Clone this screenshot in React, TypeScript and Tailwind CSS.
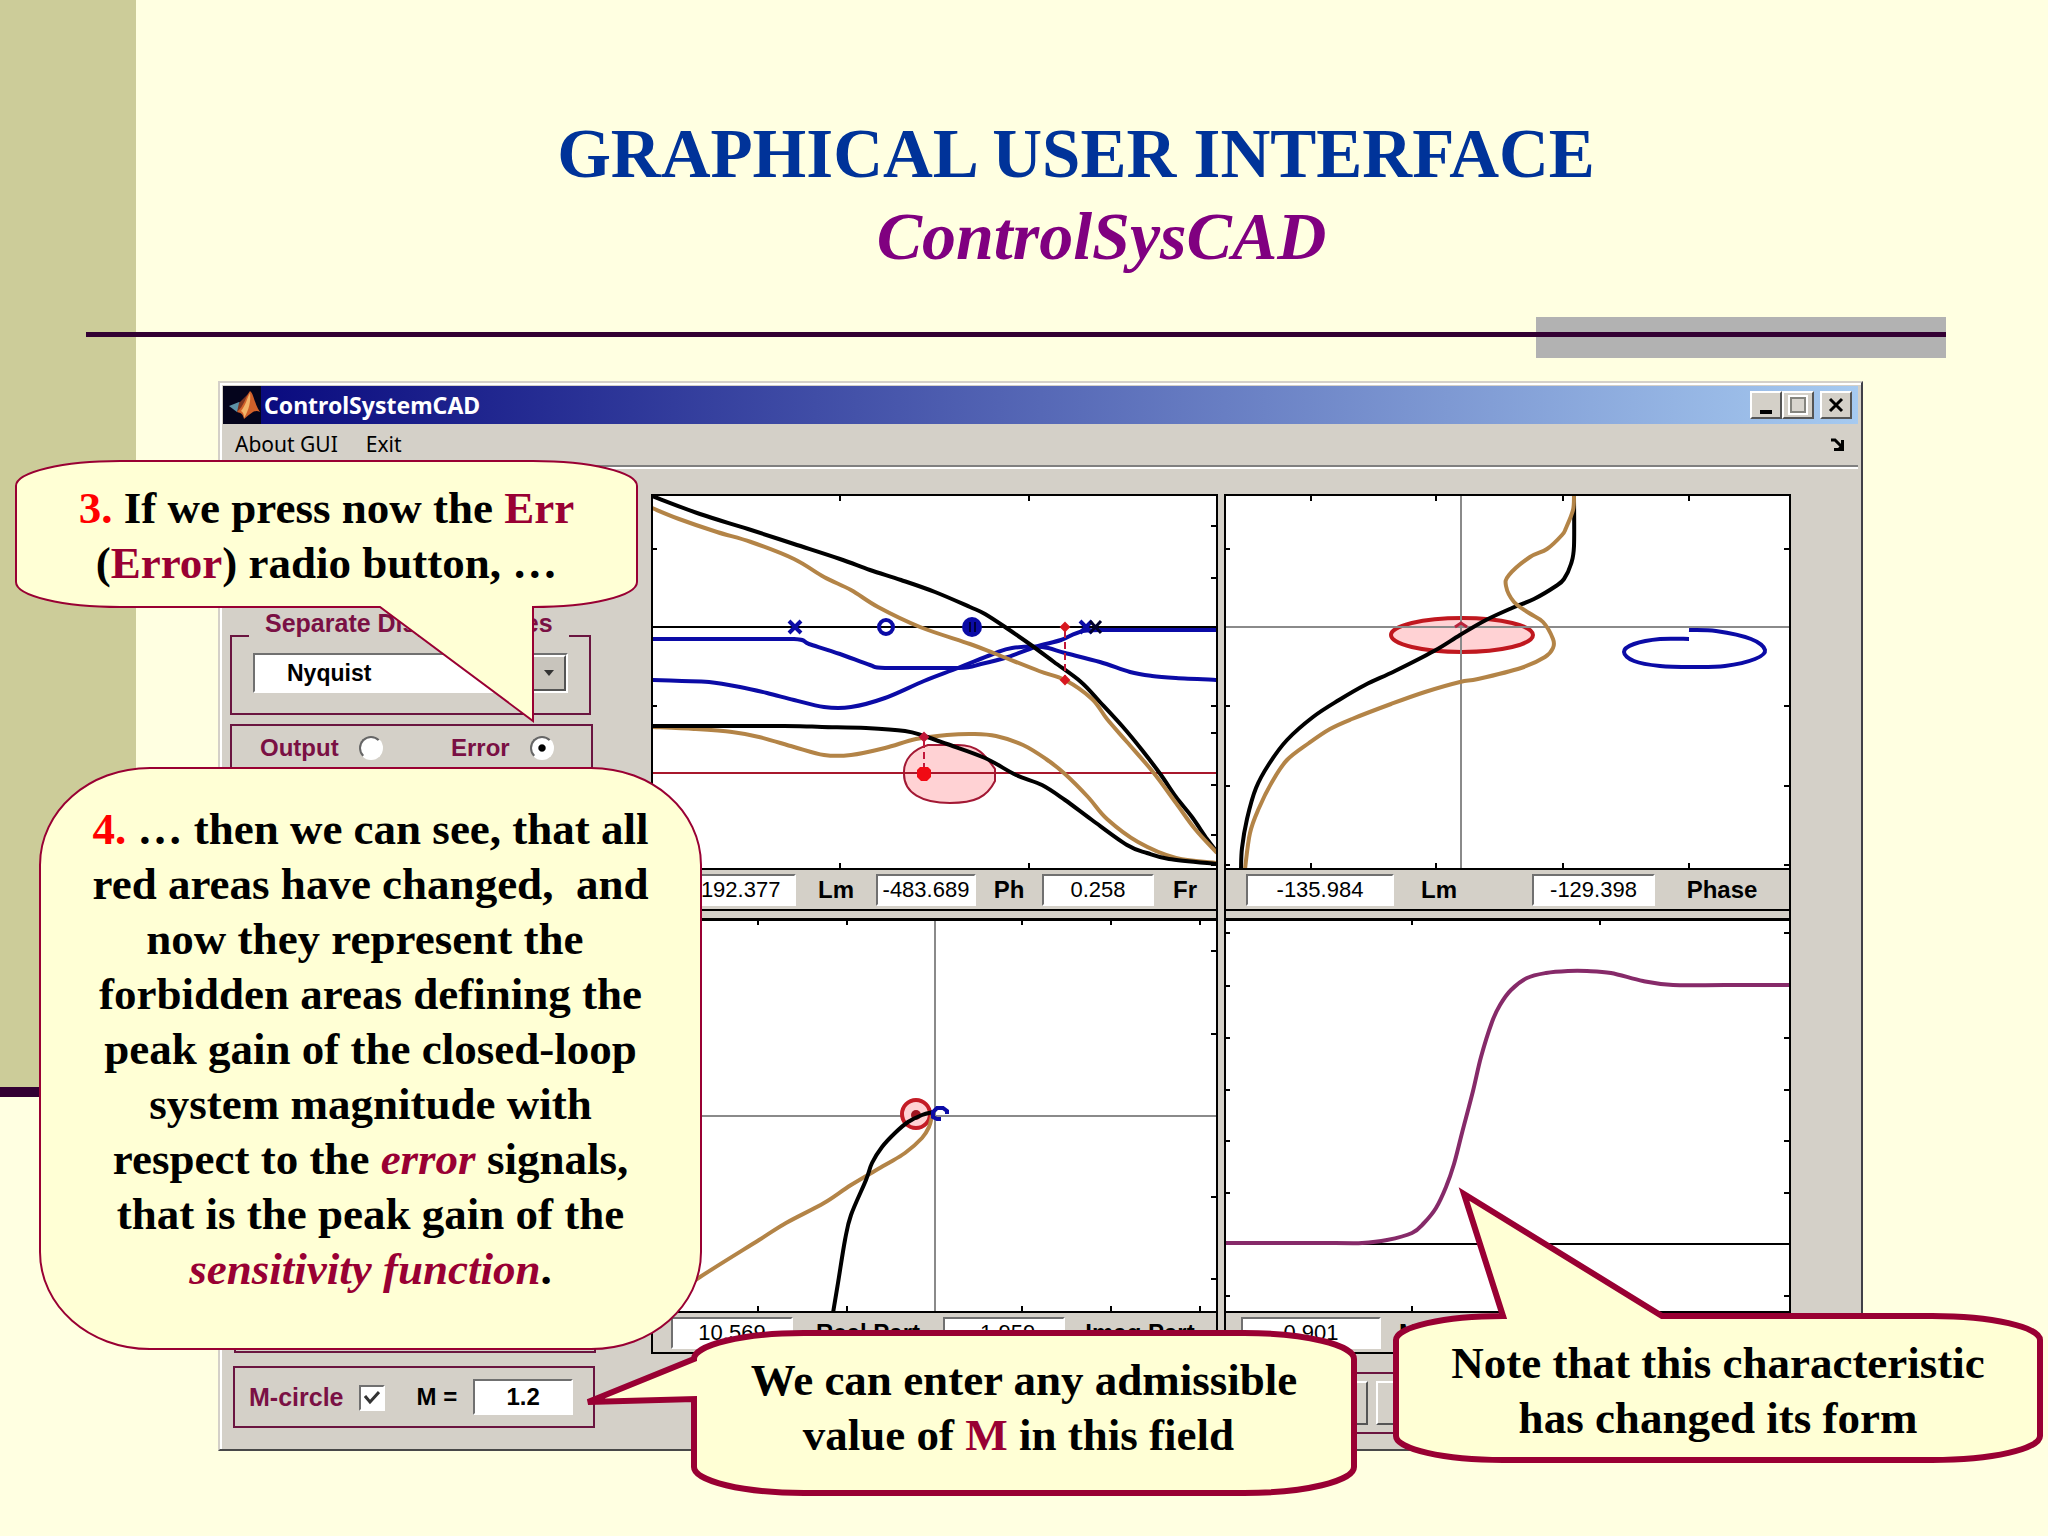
import type { ReactNode } from 'react';
import { clsx } from 'clsx';

const BLACK = '#000000';
const TAN = '#b38447';
const BLUE = '#0b0ba6';

type Curve = { color: string; width?: number; points: string };

// Bode plot: magnitude, phase and pole/zero contributions
const bodeCurves: Curve[] = [
  { color: BLUE, points: '0,144 71,144 142,144 157,149 188,159 218,170 233,173 306,173 329,169 356,162 383,152 409,145 425,138 448,135 565,135' },
  { color: BLUE, points: '0,185 30,186 57,187 88,192 115,198 142,205 172,212 199,212 233,203 272,186 306,173 341,159 360,153 390,152 413,158 448,167 478,177 500,181 524,183 565,185' },
  { color: BLACK, points: '0,1 48,19 96,34 142,49 188,64 218,75 249,85 283,97 318,112 333,119 356,134 379,150 402,167 429,187 448,207 471,232 490,255 509,280 524,302 540,322 555,344 565,357' },
  { color: TAN, points: '0,13 27,24 65,37 99,47 142,64 172,82 199,95 226,112 268,132 318,149 344,159 387,176 413,185 440,204 455,224 475,247 501,277 524,308 543,334 565,358' },
  { color: TAN, points: '0,232 42,234 80,237 107,242 142,252 172,260 199,260 233,253 264,244 295,240 321,239 344,241 371,250 394,264 413,279 436,302 455,324 486,347 524,363 565,368' },
  { color: BLACK, points: '0,231 132,231 170,232 214,233 253,236 272,241 295,249 333,263 364,280 390,290 413,305 440,325 475,350 495,358 517,364 565,369' },
];

const nicholsCurves: Curve[] = [
  { color: BLACK, points: '349,0 349,51 346,69 339,84 331,91 309,104 287,113 261,125 235,140 209,156 170,176 140,190 114,205 88,222 62,245 44,269 31,293 22,324 17,353 16,374' },
  { color: TAN, points: '349,0 348,15 341,33 337,40 322,54 305,62 284,80 281,91 289,107 304,118 318,127 328,144 328,153 320,162 296,173 253,184 235,187 200,197 166,209 127,224 105,234 84,248 62,265 47,287 34,313 25,338 20,374' },
  { color: BLUE, points: '464,144 435,144 409,149 399,157 409,166 435,171 467,172 500,171 530,164 540,155 526,144 491,136 464,135' },
];

const nyquistCurves: Curve[] = [
  { color: TAN, points: '280,197 277,208 270,219 253,234 233,246 199,266 172,284 134,304 107,321 48,358 0,391' },
  { color: BLACK, points: '281,193 270,196 256,203 243,214 230,228 220,244 214,261 199,296 193,321 186,364 181,394' },
];

const stepCurves: Curve[] = [
  { color: '#862a69', width: 4, points: '0,324 110,324 137,324 162,321 187,314 199,304 211,289 221,268 229,245 237,214 248,172 256,138 267,103 275,86 286,71 302,59 321,54 343,52 362,52 386,54 418,62 448,66 500,66 565,66' },
];

// Catmull-Rom spline through the sample points
function smooth(points: string) {
  const p = points.split(' ').map((s) => s.split(',').map(Number));
  let d = `M${p[0][0]} ${p[0][1]}`;
  for (let i = 0; i < p.length - 1; i++) {
    const a = p[i - 1] ?? p[i];
    const b = p[i];
    const c = p[i + 1];
    const e = p[i + 2] ?? c;
    // long straight runs stay straight
    if (Math.abs(c[0] - b[0]) > 60) {
      d += `L${c[0]} ${c[1]}`;
      continue;
    }
    const k = 6;
    d += `C${b[0] + (c[0] - a[0]) / k} ${b[1] + (c[1] - a[1]) / k} ${c[0] - (e[0] - b[0]) / k} ${c[1] - (e[1] - b[1]) / k} ${c[0]} ${c[1]}`;
  }
  return d;
}

function Curves({ curves }: { curves: Curve[] }) {
  return (
    <>
      {curves.map((c, i) => (
        <path key={i} d={smooth(c.points)} fill="none" stroke={c.color} strokeWidth={c.width ?? 4} strokeLinejoin="round" />
      ))}
    </>
  );
}

// Short axis marks along the given edges of a plot
function Ticks({ h, top = [], left = [], right = [] }: { h: number; top?: number[]; left?: number[]; right?: number[] }) {
  return (
    <g stroke="#000" strokeWidth={2}>
      {top.map((x) => (
        <path key={`t${x}`} d={`M${x} 0v6M${x} ${h}v-6`} />
      ))}
      {left.map((y) => (
        <path key={`l${y}`} d={`M0 ${y}h5`} />
      ))}
      {right.map((y) => (
        <path key={`r${y}`} d={`M565 ${y}h-6`} />
      ))}
    </g>
  );
}

function BodePlot() {
  return (
    <svg viewBox="1 1 563 372" preserveAspectRatio="none" className="block h-[372px] w-full bg-white">
      <Ticks h={374} top={[188, 377]} left={[54, 211]} right={[31, 83, 211, 238, 290, 340, 370]} />
      <path d="M252 279C251 264 262 254 276 250H306C326 250 333 260 343 274V286C335 302 323 308 298 308C270 308 252 298 252 279Z" fill="#ffd2d4" stroke="#a31834" strokeWidth={2} />
      <path d="M0 132H565" stroke="#000" strokeWidth={2} />
      <path d="M0 278H565" stroke="#a8182c" strokeWidth={2} />
      <Curves curves={bodeCurves} />
      <path d="M272 246V276M413 136V182" stroke="#c2183a" strokeWidth={2} strokeDasharray="7 4" />
      <path d="M268 272h8l3 3v7l-4 4h-6l-4 -4v-7Z" fill="#f00a14" />
      <path d="M272 238l4 4l-4 4l-4 -4Z" fill="#c2183a" stroke="#c2183a" strokeWidth={2} />
      <path d="M413 128l4 4l-4 4l-4 -4ZM413 181l4 4l-4 4l-4 -4Z" fill="#d81820" stroke="#d81820" strokeWidth={2} />
      <path d="M137 126l12 12m0 -12l-12 12M428 126l12 12m0 -12l-12 12" stroke={BLUE} strokeWidth={4} />
      <path d="M438 126l11 12m0 -12l-11 12" stroke="#00002c" strokeWidth={3} />
      <circle cx={234} cy={132} r={7} fill="none" stroke={BLUE} strokeWidth={4} />
      <circle cx={320} cy={132} r={10} fill={BLUE} />
      <path d="M318 127v10M323 127v10" stroke="#000040" strokeWidth={2} />
    </svg>
  );
}

function NicholsPlot() {
  return (
    <svg viewBox="1 1 563 372" preserveAspectRatio="none" className="block h-[372px] w-full bg-white">
      <Ticks h={374} top={[86, 211, 338, 464]} left={[54, 211, 291, 370]} right={[54, 211, 291, 370]} />
      <ellipse cx={237} cy={140} rx={71} ry={17} fill="#ffd2d4" stroke="#c0181f" strokeWidth={4} />
      <path d="M0 132H565M236 0V374" stroke="#8a8a8a" strokeWidth={2} />
      <path d="M230 132l6 -4l6 4" fill="none" stroke="#b8243c" strokeWidth={3} />
      <Curves curves={nicholsCurves} />
    </svg>
  );
}

function NyquistPlot() {
  return (
    <svg viewBox="1 2 563 390" preserveAspectRatio="none" className="block h-[390px] w-full bg-white">
      <Ticks h={393} top={[17, 106, 195, 370, 459, 548]} left={[32, 115, 278, 360]} right={[32, 115, 278, 360]} />
      <path d="M0 197H565M283 0V393" stroke="#8a8a8a" strokeWidth={2} />
      <circle cx={264} cy={195} r={14} fill="#ffd2d4" stroke="#c41c26" strokeWidth={4} />
      <circle cx={264} cy={196} r={5} fill="#a01420" />
      <Curves curves={nyquistCurves} />
      <path d="M295 195v-3l-4 -3h-6l-4 4v5l4 2h4" fill="none" stroke={BLUE} strokeWidth={4} />
    </svg>
  );
}

function StepPlot() {
  return (
    <svg viewBox="1 2 563 390" preserveAspectRatio="none" className="block h-[390px] w-full bg-white">
      <Ticks h={393} top={[187, 375]} left={[14, 67, 119, 171, 222, 274, 377]} right={[14, 67, 119, 171, 222, 274, 377]} />
      <path d="M0 325H565" stroke="#000" strokeWidth={2} />
      <Curves curves={stepCurves} />
    </svg>
  );
}

const sunken = 'border-2 border-t-[#707070] border-l-[#707070] border-r-white border-b-white';
const raised = 'border-2 border-t-white border-l-white border-r-[#555] border-b-[#555]';

function Readout({ label, value, width, labelWidth }: { label: string; value: string; width: string; labelWidth: string }) {
  return (
    <label className="flex shrink-0 flex-row-reverse items-center">
      <span className={clsx('text-center text-2xl leading-8 font-bold whitespace-nowrap', labelWidth)}>{label}</span>
      <input defaultValue={value} className={clsx('h-8 bg-white text-center text-[22px]', sunken, width)} />
    </label>
  );
}

const group = 'border-2 border-[#6a1540]';
const groupLabel = 'leading-6 font-bold text-[#7a1044]';
const radio = 'size-6 appearance-none rounded-full border-2 border-t-[#666] border-l-[#666] border-r-white border-b-white bg-white checked:bg-[radial-gradient(circle,#000_22%,#fff_30%)]';

function Sidebar() {
  return (
    <div className="flex w-[428px] shrink-0 flex-col pl-[7px]">
      <fieldset className={clsx('mt-[117px] h-[104px] w-[361px] px-[21px]', group)}>
        <legend className={clsx('-mx-1 -mb-2 px-4 pb-[26px] text-[25px] whitespace-nowrap', groupLabel)}>Separate Display Modes</legend>
        <div className="grid">
          <select aria-label="Separate Display Modes" className={clsx('col-start-1 row-start-1 h-10 appearance-none bg-white pl-8 text-[23px] font-bold', sunken)}>
            <option>Nyquist</option>
          </select>
          <span className={clsx('pointer-events-none col-start-1 row-start-1 mr-[2px] grid h-9 w-[34px] place-items-center self-center justify-self-end bg-[#c8c4bc]', raised)}>
            <svg width="10" height="6" viewBox="0 0 10 6">
              <path d="M0 0H10L5 6Z" fill="#333" />
            </svg>
          </span>
        </div>
      </fieldset>

      <div className={clsx('mt-[9px] flex h-[70px] w-[363px] items-start pt-[10px] pl-[28px] text-2xl', group)}>
        <label className={clsx('flex w-[191px] items-center gap-[20px]', groupLabel)}>
          Output
          <input type="radio" name="signal" className={radio} />
        </label>
        <label className={clsx('flex items-center gap-[20px]', groupLabel)}>
          Error
          <input type="radio" name="signal" defaultChecked className={radio} />
        </label>
      </div>

      <div className={clsx('mt-[10px] ml-1 h-[549px] w-[362px]', group)} />

      <div className={clsx('mt-[13px] ml-[3px] flex h-[62px] w-[362px] items-center pl-[14px]', group)}>
        <label className={clsx('flex items-center gap-[16px] text-[25px]', groupLabel)}>
          <span className="whitespace-nowrap">M-circle</span>
          <span className="grid size-6 place-items-center">
            <input type="checkbox" defaultChecked className={clsx('col-start-1 row-start-1 size-[26px] appearance-none bg-white', sunken)} />
            <svg viewBox="0 0 16 16" className="pointer-events-none col-start-1 row-start-1 size-4">
              <path d="M1 6L6 12L15 2" fill="none" stroke="#333" strokeWidth={3} />
            </svg>
          </span>
        </label>
        <label className="ml-[33px] flex items-center gap-4 text-2xl font-bold whitespace-nowrap">
          M =
          <input defaultValue="1.2" className={clsx('h-9 w-[100px] bg-white text-center text-2xl font-bold', sunken)} />
        </label>
      </div>
    </div>
  );
}

const readoutRow = 'flex items-center border-t-2 border-black';

function PlotArea() {
  return (
    <div className="min-w-0 flex-1">
      <div className="grid grid-cols-2 gap-[6px]">
        <div className="min-w-0 border-2 border-black">
          <BodePlot />
          <div className={clsx('h-[41px] pl-[25px]', readoutRow)}>
            <Readout label="Lm" value="-192.377" width="w-[118px]" labelWidth="w-[80px]" />
            <Readout label="Ph" value="-483.689" width="w-[100px]" labelWidth="w-[66px]" />
            <Readout label="Fr" value="0.258" width="w-[112px]" labelWidth="w-[62px]" />
          </div>
          <div className="h-[12px] border-t-2 border-b-[3px] border-black" />
          <NyquistPlot />
          <div className={clsx('h-[41px] pl-[18px]', readoutRow)}>
            <Readout label="Real Part" value="10.569" width="w-[122px]" labelWidth="w-[150px]" />
            <Readout label="Imag Part" value="-1.959" width="w-[122px]" labelWidth="w-[150px]" />
          </div>
        </div>
        <div className="min-w-0 border-2 border-black">
          <NicholsPlot />
          <div className={clsx('h-[41px] pl-[20px]', readoutRow)}>
            <Readout label="Lm" value="-135.984" width="w-[148px]" labelWidth="w-[90px]" />
            <div className="w-[48px] shrink-0" />
            <Readout label="Phase" value="-129.398" width="w-[123px]" labelWidth="w-[134px]" />
          </div>
          <div className="h-[12px] border-t-2 border-b-[3px] border-black" />
          <StepPlot />
          <div className={clsx('h-[41px] pl-[15px]', readoutRow)}>
            <Readout label="Mag" value="0.901" width="w-[140px]" labelWidth="w-[84px]" />
          </div>
        </div>
      </div>
      <div className={clsx('mt-[18px] ml-[60px] flex h-[62px] items-center gap-2 px-[6px]', group)}>
        <button aria-label="Open" className={clsx('h-11 w-[211px]', raised)} />
        <button aria-label="Save" className={clsx('h-11 w-[211px]', raised)} />
        <button aria-label="Print" className={clsx('h-11 w-[211px]', raised)} />
        <button aria-label="Close" className={clsx('h-11 flex-1', raised)} />
      </div>
    </div>
  );
}

function MatlabLogo() {
  return (
    <svg viewBox="0 0 38 38" className="h-[38px] w-[38px]">
      <rect width="38" height="38" fill="#04041c" />
      <path d="M6 20L16 16L21 20L14 26Z" fill="#5d93a8" />
      <path d="M16 17L25 8L21 24L14 26Z" fill="#7c3420" />
      <path d="M27 5C31 8 31 17 37 26C31 23 28 28 21 33C20 28 18 27 14 26C21 20 23 10 27 5Z" fill="#d0602a" />
      <path d="M27 7C28 15 26 24 21 32C21 28 20 26 18 25C23 19 24 12 27 7Z" fill="#f3b469" />
    </svg>
  );
}

function AppWindow() {
  const caption = clsx('grid h-7 w-8 place-items-center bg-[#d4d0c8]', raised);
  return (
    <section className="mt-[23px] mr-[185px] ml-[218px] border-2 border-t-[#d4d0c8] border-l-[#d4d0c8] border-r-[#404048] border-b-[#484848] bg-[#d4d0c8] p-[3px] font-['Liberation_Sans',Arial,sans-serif] text-black shadow-[inset_2px_2px_0_#ffffff]">
      <div className="flex h-[38px] items-center bg-linear-to-r/srgb from-[#06067c] to-[#a6caf0] pr-[6px]">
        <MatlabLogo />
        <h2 className="flex-1 pl-[3px] font-['Noto_Sans',sans-serif] text-[23px] font-bold text-white">ControlSystemCAD</h2>
        <button aria-label="Minimize" className={caption}>
          <svg width="20" height="20" viewBox="0 0 20 20">
            <path d="M4 17H16" stroke="#000" strokeWidth={4} />
          </svg>
        </button>
        <button aria-label="Maximize" className={caption}>
          <svg width="20" height="20" viewBox="0 0 20 20">
            <path d="M1 1H19V19H1Z" fill="#e4e2dc" stroke="#fff" strokeWidth={2} />
            <rect x="3" y="3" width="14" height="14" fill="#d8d5ce" stroke="#85857f" strokeWidth={2} />
          </svg>
        </button>
        <button aria-label="Close" className={clsx('ml-[6px]', caption)}>
          <svg width="20" height="20" viewBox="0 0 20 20">
            <path d="M4 4L16 16M16 4L4 16" stroke="#000" strokeWidth={3} />
          </svg>
        </button>
      </div>
      <nav className="flex h-[43px] items-center gap-7 border-b-2 border-[#808080] pl-3 font-['Noto_Sans',sans-serif] text-[21px] shadow-[0_2px_0_#ffffff]">
        <button>About GUI</button>
        <button>Exit</button>
        <svg viewBox="0 0 16 14" className="mr-[12px] ml-auto h-[14px] w-4">
          <path d="M1 2L5 2L11 8" fill="none" stroke="#000" strokeWidth={3} />
          <path d="M14 2V13H4V10H8L11 7V2Z" fill="#000" />
        </svg>
      </nav>
      <div className="flex pt-[27px] pr-[67px] pb-3">
        <Sidebar />
        <PlotArea />
      </div>
    </section>
  );
}

type CalloutProps = {
  box: string;
  viewBox: string;
  outline: string;
  stroke: number;
  text: string;
  children: ReactNode;
};

// Speech balloon: the outline may run outside the box where its tail points
function Callout({ box, viewBox, outline, stroke, text, children }: CalloutProps) {
  return (
    <div className={clsx('absolute', box)}>
      <svg viewBox={viewBox} className="absolute inset-0 h-full w-full overflow-visible">
        <path d={outline} fill="#ffffd5" stroke="#990033" strokeWidth={stroke} />
      </svg>
      <p className={clsx('relative text-center text-[45px] leading-[55px] font-bold whitespace-nowrap text-black', text)}>{children}</p>
    </div>
  );
}

export default function App() {
  return (
    <main className="relative min-h-screen overflow-hidden bg-[#ffffe1] font-['Liberation_Serif','Times_New_Roman',serif]">
      <div className="absolute top-0 left-0 h-[1087px] w-[136px] bg-[#cccc99]" />
      <div className="absolute top-[1087px] left-0 h-[10px] w-[136px] bg-[#330033]" />

      <div className="relative">
        <header className="pt-[113px] pr-8 pl-[136px] text-center">
          <h1 className="text-[69px] leading-[82px] font-bold text-[#003399]">
            GRAPHICAL USER INTERFACE
            <br />
            <em className="text-[68px] text-[#800080]">{'\u00a0\u00a0\u00a0'}ControlSysCAD</em>
          </h1>
        </header>
        <div className="mt-10 mr-[102px] ml-[86px] flex h-[41px] items-start justify-end">
          <div className="mt-[15px] h-[5px] flex-1 bg-[#330033]" />
          <div className="h-full w-[410px] bg-[#b2b2b2] pt-[15px]">
            <div className="h-[5px] bg-[#330033]" />
          </div>
        </div>
        <AppWindow />
      </div>

      <Callout
        box="left-[16px] top-[461px] h-[146px] w-[621px]"
        viewBox="0 0 621 146"
        outline="M104 0H517C574 0 621 11 621 25V121C621 135 574 146 517 146V260L364 146H104C47 146 0 135 0 121V25C0 11 47 0 104 0Z"
        stroke={2}
        text="pt-5"
      >
        <span className="text-[#ff0000]">3.</span> If we press now the <span className="text-[#990033]">Err</span>
        <br />(<span className="text-[#990033]">Error</span>) radio button, …
      </Callout>

      <Callout
        box="left-[40px] top-[768px] h-[581px] w-[661px]"
        viewBox="0 0 661 581"
        outline="M110 0H551C612 0 661 43 661 97V484C661 538 612 581 551 581H110C49 581 0 538 0 484V97C0 43 49 0 110 0Z"
        stroke={2}
        text="pt-[34px]"
      >
        <span className="text-[#ff0000]">4.</span> … then we can see, that all
        <br />
        red areas have changed,&nbsp; and
        <br />
        now they represent the&nbsp;
        <br />
        forbidden areas defining the
        <br />
        peak gain of the closed-loop
        <br />
        system magnitude with
        <br />
        respect to the <em className="text-[#990033]">error</em> signals,
        <br />
        that is the peak gain of the
        <br />
        <em className="text-[#990033]">sensitivity function</em>.
      </Callout>

      <Callout
        box="left-[694px] top-[1333px] h-[160px] w-[660px]"
        viewBox="0 0 660 160"
        outline="M110 0H550C611 0 660 12 660 26V134C660 148 611 160 550 160H110C49 160 0 148 0 134V66L-106 69L0 26C0 12 49 0 110 0Z"
        stroke={6}
        text="pt-5"
      >
        We can enter any admissible
        <br />
        value of <span className="text-[#990033]">M</span> in this field&nbsp;
      </Callout>

      <Callout
        box="left-[1396px] top-[1316px] h-[144px] w-[644px]"
        viewBox="0 0 644 144"
        outline="M107 0L68 -122L266 0H536C596 0 644 11 644 24V120C644 133 596 144 536 144H107C48 144 0 133 0 120V24C0 11 48 0 107 0Z"
        stroke={6}
        text="pt-5"
      >
        Note that this characteristic
        <br />
        has changed its form
      </Callout>
    </main>
  );
}
